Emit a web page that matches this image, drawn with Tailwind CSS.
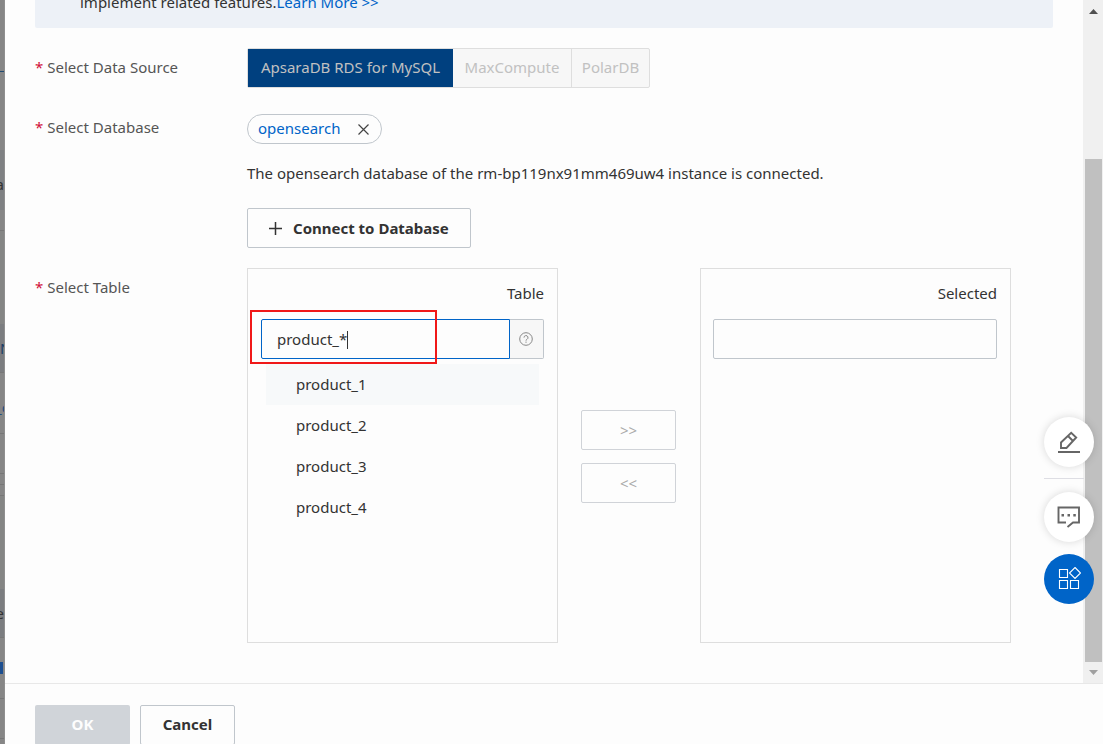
<!DOCTYPE html>
<html lang="en">

<head>
    <meta charset="UTF-8">
    <meta name="viewport" content="width=device-width, initial-scale=1.0">
    <title>Select Data Source</title>
    <script src="https://cdn.jsdelivr.net/npm/@tailwindcss/browser@4"></script>
</head>

<body class="flex h-screen overflow-hidden bg-[#fdfdfd] font-['Noto_Sans','Open_Sans',sans-serif] text-[15px] leading-6 text-[#333]">

    <!-- dimmed page behind the drawer -->
    <div class="flex w-[5px] shrink-0 flex-col overflow-hidden border-r border-[#8f8f8f] bg-[#868686]" aria-hidden="true">
        <div class="h-[72px] shrink-0 border-b border-[#1f4a70]"></div>
        <div class="h-[78px] shrink-0"></div>
        <div class="flex h-[60px] shrink-0 items-center justify-end bg-[#7f8183] pt-2">a</div>
        <div class="h-[21px] shrink-0 border-b border-[#777]"></div>
        <div class="h-[93px] shrink-0 bg-[#848584]"></div>
        <div class="flex h-[49px] shrink-0 items-center border-b border-[#777] bg-[#7b7d80] text-[#1d3f66]">N</div>
        <div class="flex h-[61px] shrink-0 items-center justify-center border-b border-[#777] pt-2 text-[#1d4f80]">_c</div>
        <div class="h-10 shrink-0 border-b border-[#777]"></div>
        <div class="h-[11px] shrink-0 border-b border-[#777]"></div>
        <div class="h-[11px] shrink-0 border-b border-[#777]"></div>
        <div class="h-[93px] shrink-0 bg-[#848584]"></div>
        <div class="flex h-[49px] shrink-0 items-center justify-end border-b border-[#777] bg-[#7b7d80]">e</div>
        <div class="flex h-[61px] shrink-0 items-center border-b border-[#777]"><span class="h-3 w-[3px] bg-[#1d4f90]"></span></div>
        <div class="h-10 shrink-0 border-b border-[#777]"></div>
    </div>

    <main class="relative flex min-w-0 flex-1 flex-col">
        <div class="flex min-h-0 flex-1 border-b border-[#e8e8e8]">

            <form class="min-w-0 flex-1 overflow-hidden px-[30px]">
                <!-- notice -->
                <div class="flex h-7 items-end overflow-hidden rounded-b-xs bg-[#edf1f7] pb-3.5 pl-[45px]">
                    <p>implement related features.<a href="#" class="text-[#0064c8]">Learn More &gt;&gt;</a></p>
                </div>

                <div class="mt-5 flex items-start">
                    <div id="sourceLabel" class="w-[212px] shrink-0 pt-[7px] text-[#555]"><span class="mr-1 text-[#d0103a]">*</span>Select Data Source</div>
                    <div role="group" aria-labelledby="sourceLabel" class="flex h-10 rounded-xs border border-[#dedede] bg-[#f7f7f7] text-[#c1c1c1]">
                        <button type="button" class="w-[205px] bg-[#00407f] pb-0.5">ApsaraDB RDS for MySQL</button>
                        <button type="button" class="w-[119px] border-r border-[#dedede] pb-0.5" disabled>MaxCompute</button>
                        <button type="button" class="w-[77px] pb-0.5" disabled>PolarDB</button>
                    </div>
                </div>

                <div class="mt-[26px] flex items-start">
                    <div class="w-[212px] shrink-0 pt-px text-[#555]"><span class="mr-1 text-[#d0103a]">*</span>Select Database</div>
                    <div>
                        <div class="flex h-[30px] w-[135px] items-center justify-between rounded-full border border-[#c0c6cc] pr-3 pl-2.5 text-[#0064c8]">
                            <span class="pb-0.5">opensearch</span>
                            <button type="button" aria-label="Remove opensearch">
                                <svg class="size-[11px]" viewBox="0 0 11 11" fill="none" stroke="#444" stroke-width="1.2"><path d="M.5.5l10 10M10.5.5l-10 10"/></svg>
                            </button>
                        </div>
                        <p class="mt-[17px]">The opensearch database of the rm-bp119nx91mm469uw4 instance is connected.</p>
                        <button type="button" class="mt-[23px] flex h-10 w-56 items-center gap-2.5 rounded-xs border border-[#c0c6cc] pl-5 font-bold">
                            <svg class="size-[15px]" viewBox="0 0 15 15" fill="none" stroke="#333" stroke-width="1.5"><path d="M7.5 1v13M1 7.500h13"/></svg>
                            Connect to Database
                        </button>
                    </div>
                </div>

                <div class="mt-5 flex items-start">
                    <div class="w-[212px] shrink-0 pt-[7px] text-[#555]"><span class="mr-1 text-[#d0103a]">*</span>Select Table</div>

                    <div class="flex items-center">
                        <section class="h-[375px] w-[311px] border border-[#dedede] px-[13px] pt-3">
                            <label for="tableSearch" class="block text-right">Table</label>
                            <div class="relative mt-3.5 flex h-10">
                                <input id="tableSearch" type="text" value="product_*" class="min-w-0 flex-1 rounded-l-xs border border-[#0064c8] px-[15px] outline-none">
                                <button type="button" aria-label="Help" class="flex w-[34px] items-center justify-center rounded-r-xs border border-l-0 border-[#c0c6cc] bg-[#f7f7f7] pr-0.5">
                                    <svg class="size-[14px]" viewBox="0 0 14 14" fill="none" stroke="#888"><circle cx="7" cy="7" r="6.3"/><path d="M5 5.600a2 2 0 1 1 3 1.700q-1 .5-1 1.300M7 9.600v1.200"/></svg>
                                </button>
                                <span class="absolute top-3 left-[86px] h-[18px] w-px bg-[#333]"></span>
                                <span class="pointer-events-none absolute -top-[9px] -left-[11px] h-[54px] w-[187px] border-2 border-[#f01818]"></span>
                            </div>
                            <ul class="mt-[5px] px-[5px]">
                                <li class="h-[41px] bg-[#f7f9fa] pl-[30px] leading-[41px]">product_1</li>
                                <li class="h-[41px] pl-[30px] leading-[41px]">product_2</li>
                                <li class="h-[41px] pl-[30px] leading-[41px]">product_3</li>
                                <li class="h-[41px] pl-[30px] leading-[41px]">product_4</li>
                            </ul>
                        </section>

                        <div class="mr-6 ml-[23px] flex flex-col gap-[13px] pt-0.5">
                            <button type="button" class="h-10 w-[95px] rounded-xs border border-[#d0d3d8] text-[#aaa]" disabled>&gt;&gt;</button>
                            <button type="button" class="h-10 w-[95px] rounded-xs border border-[#d0d3d8] text-[#aaa]" disabled>&lt;&lt;</button>
                        </div>

                        <section class="h-[375px] w-[311px] border border-[#dedede] pt-3 pr-[13px] pl-3">
                            <label for="selectedSearch" class="block text-right">Selected</label>
                            <input id="selectedSearch" type="text" class="mt-3.5 h-10 w-full rounded-xs border border-[#c0c6cc] px-[15px] outline-none">
                        </section>
                    </div>
                </div>
            </form>

            <!-- scrollbar -->
            <div class="flex w-5 shrink-0 flex-col items-center bg-[#f0f0f0]" aria-hidden="true">
                <div class="flex h-[159px] items-start pt-[9px]">
                    <svg class="h-[5px] w-[9px]" viewBox="0 0 9 5" fill="#505050"><path d="M0 5L4.500 0 9 5z"/></svg>
                </div>
                <div class="w-[17px] flex-1 bg-[#c0c0c0]"></div>
                <div class="flex h-[21px] items-center">
                    <svg class="h-[5px] w-[9px]" viewBox="0 0 9 5" fill="#a0a0a0"><path d="M0 0h9L4.500 5z"/></svg>
                </div>
            </div>
        </div>

        <footer class="flex h-[60px] shrink-0 gap-2.5 overflow-hidden px-[30px] pt-[21px] font-bold">
            <button type="button" class="h-10 w-[95px] shrink-0 rounded-xs bg-[#d0d4d9] pb-0.5 text-[#fdfdfd]" disabled>OK</button>
            <button type="button" class="h-10 w-[95px] shrink-0 rounded-xs border border-[#c0c6cc] pb-0.5">Cancel</button>
        </footer>

        <!-- floating tools -->
        <div class="absolute top-[417px] right-[9px] flex flex-col">
            <button type="button" aria-label="Edit" class="flex size-[50px] items-center justify-center rounded-full bg-white shadow-[0_0_8px_rgba(0,0,0,0.15)]">
                <svg class="size-6" viewBox="0 0 24 24" fill="none" stroke="#666" stroke-width="1.900"><path d="M1 22h22M4 18v-5.500L14.200 2.800l5 4.700L9.500 18zM11 6l5 5"/></svg>
            </button>
            <span class="mt-[11px] mb-[13px] h-px w-10 bg-[#dedee4]"></span>
            <button type="button" aria-label="Feedback" class="flex size-[50px] items-center justify-center rounded-full bg-white shadow-[0_0_8px_rgba(0,0,0,0.15)]">
                <svg class="size-6" viewBox="0 0 24 24" fill="none" stroke="#666" stroke-width="1.900"><path d="M9 17.500H1.500v-15h20.500v15h-6L10.500 22"/><path d="M4.500 10.300h2.500M10.500 10.300h2.500M16.300 10.300h2.500" stroke-width="2.500"/></svg>
            </button>
            <button type="button" aria-label="Apps" class="mt-3 flex size-[50px] items-center justify-center rounded-full bg-[#0064c8]">
                <svg class="size-6" viewBox="0 0 24 24" fill="none" stroke="#fff" stroke-width="1.100"><path d="M2.500 2.500h8v8h-8zM2.500 13.500h8v8h-8zM13.500 13.500h8v8h-8zM18 .5l5.500 5.500-5.500 5.500-5.500-5.500z"/></svg>
            </button>
        </div>
    </main>

</body>

</html>
